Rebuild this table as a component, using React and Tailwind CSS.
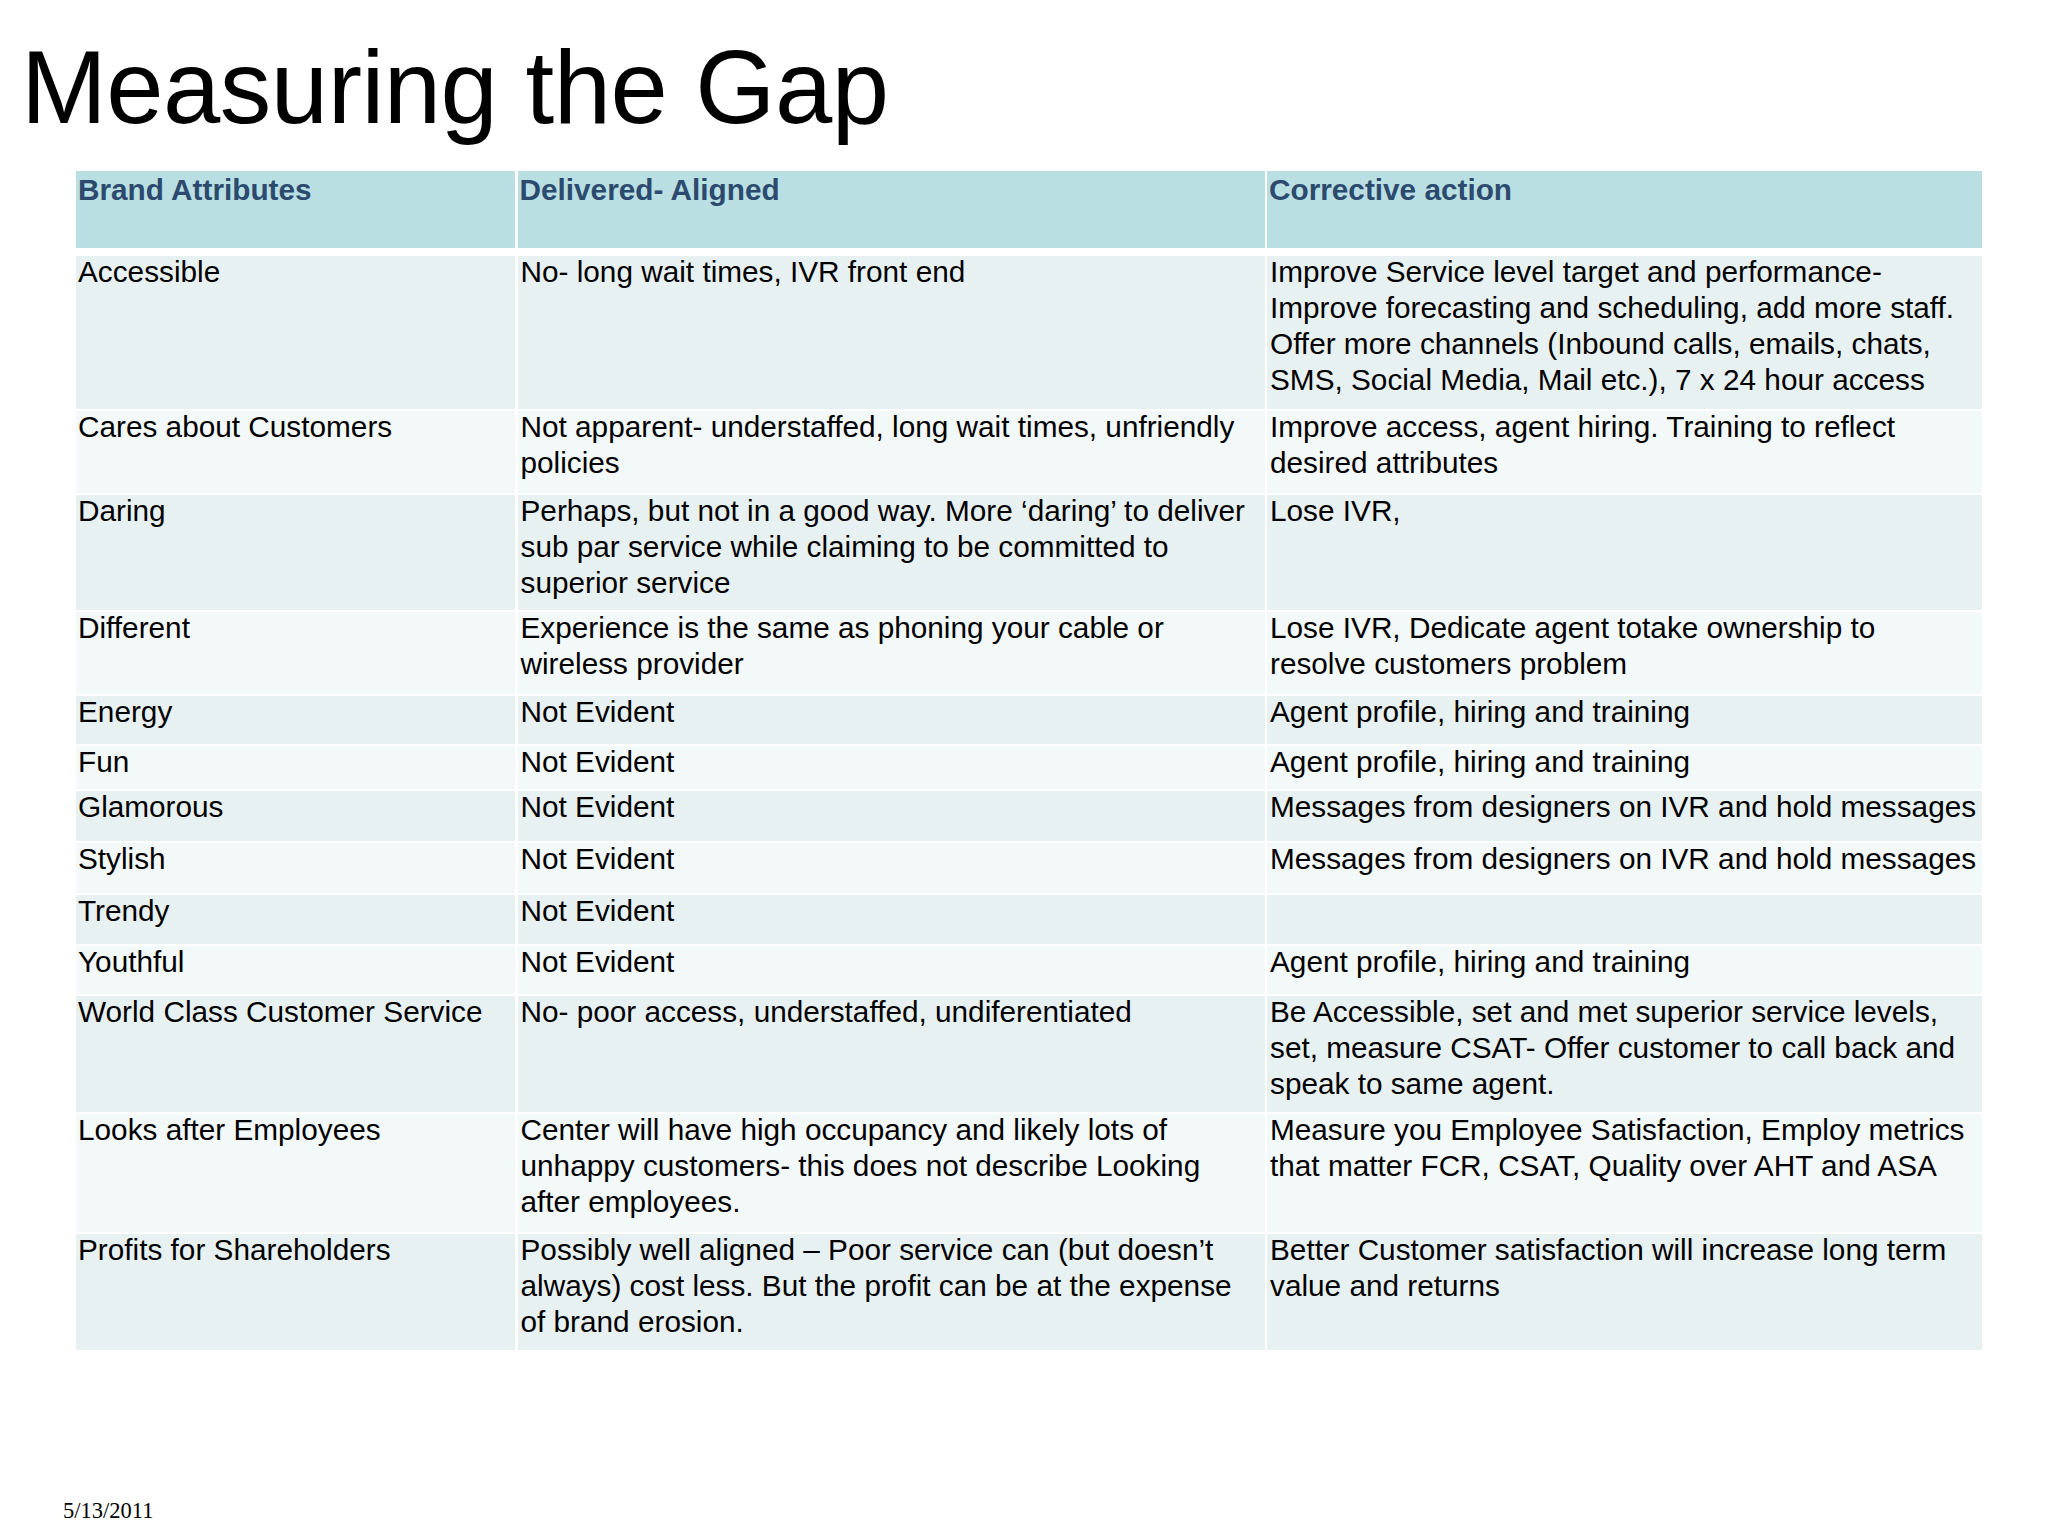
const rows = [
  {
    h: 'h-[153px]',
    a: 'Accessible',
    d: 'No- long wait times, IVR front end',
    c: 'Improve Service level target and performance- Improve forecasting and scheduling, add more staff. Offer more channels (Inbound calls, emails, chats, SMS, Social Media, Mail etc.), 7 x 24 hour access',
  },
  {
    h: 'h-[82px]',
    a: 'Cares about Customers',
    d: 'Not apparent- understaffed, long wait times, unfriendly policies',
    c: 'Improve access, agent hiring. Training to reflect desired attributes',
  },
  {
    h: 'h-[115px]',
    a: 'Daring',
    d: 'Perhaps, but not in a good way. More \u2018daring\u2019 to deliver sub par service while claiming to be committed to superior service',
    c: 'Lose IVR,',
  },
  {
    h: 'h-[82px]',
    a: 'Different',
    d: 'Experience is the same as phoning your cable or wireless provider',
    c: 'Lose IVR, Dedicate agent totake ownership to\nresolve customers problem',
  },
  { h: 'h-[48px]', a: 'Energy', d: 'Not Evident', c: 'Agent profile, hiring and training' },
  { h: 'h-[43px]', a: 'Fun', d: 'Not Evident', c: 'Agent profile, hiring and training' },
  { h: 'h-[50px]', a: 'Glamorous', d: 'Not Evident', c: 'Messages from designers on IVR and hold messages', nowrap: true },
  { h: 'h-[50px]', a: 'Stylish', d: 'Not Evident', c: 'Messages from designers on IVR and hold messages', nowrap: true },
  { h: 'h-[49px]', a: 'Trendy', d: 'Not Evident', c: '' },
  { h: 'h-[48px]', a: 'Youthful', d: 'Not Evident', c: 'Agent profile, hiring and training' },
  {
    h: 'h-[116px]',
    a: 'World Class Customer Service',
    d: 'No- poor access, understaffed, undiferentiated',
    c: 'Be Accessible, set and met superior service levels, set, measure CSAT- Offer customer to call back and speak to same agent.',
  },
  {
    h: 'h-[118px]',
    a: 'Looks after Employees',
    d: 'Center will have high occupancy and likely lots of unhappy customers- this does not describe Looking after employees.',
    c: 'Measure you Employee Satisfaction, Employ metrics that matter FCR, CSAT, Quality over AHT and ASA',
  },
  {
    h: 'h-[116px]',
    a: 'Profits for Shareholders',
    d: 'Possibly well aligned \u2013 Poor service can (but doesn\u2019t always) cost less. But the profit can be at the expense of brand erosion.',
    c: 'Better Customer satisfaction will increase long term value and returns',
  },
]

const cols = 'grid grid-cols-[439px_747px_715px] gap-x-[2.5px]'

export default function App() {
  return (
    <div className="w-[2048px] h-[1536px] bg-white relative font-['Liberation_Sans',Arial,sans-serif] text-black">
      {/* Title */}
      <h1 className="pl-[21px] pt-[28px] text-[103px] leading-[120px] tracking-[-0.5px]">Measuring the Gap</h1>

      {/* Table */}
      <div className="ml-[76px] mt-[23px] w-[1906px] text-[29.75px] leading-[36px]">
        <div className={`${cols} h-[77px] mb-[8px]`}>
          {['Brand Attributes', 'Delivered- Aligned', 'Corrective action'].map((t) => (
            <div key={t} className="bg-[#b9dfe3] pl-[2px] pt-[1px] font-bold text-[#2c4a6e]">
              {t}
            </div>
          ))}
        </div>

        <div className="flex flex-col gap-y-[2px]">
          {rows.map((r, i) => (
            <div key={r.a} className={`${cols} ${r.h}`}>
              {[r.a, r.d, r.c].map((t, j) => (
                <div
                  key={j}
                  className={`${i % 2 === 0 ? 'bg-[#e8f1f1]' : 'bg-[#f3f8f9]'} ${j === 0 ? 'pl-[2px]' : 'pl-[3px]'} ${j === 2 && r.nowrap ? 'whitespace-nowrap' : 'whitespace-pre-line'}`}
                >
                  <p className="-mt-[2px]">{t}</p>
                </div>
              ))}
            </div>
          ))}
        </div>
      </div>

      {/* Footer date */}
      <div className="absolute left-[63px] top-[1495px] font-['Liberation_Serif','Times_New_Roman',serif] text-[22.5px] leading-[32px]">
        5/13/2011
      </div>
    </div>
  )
}
